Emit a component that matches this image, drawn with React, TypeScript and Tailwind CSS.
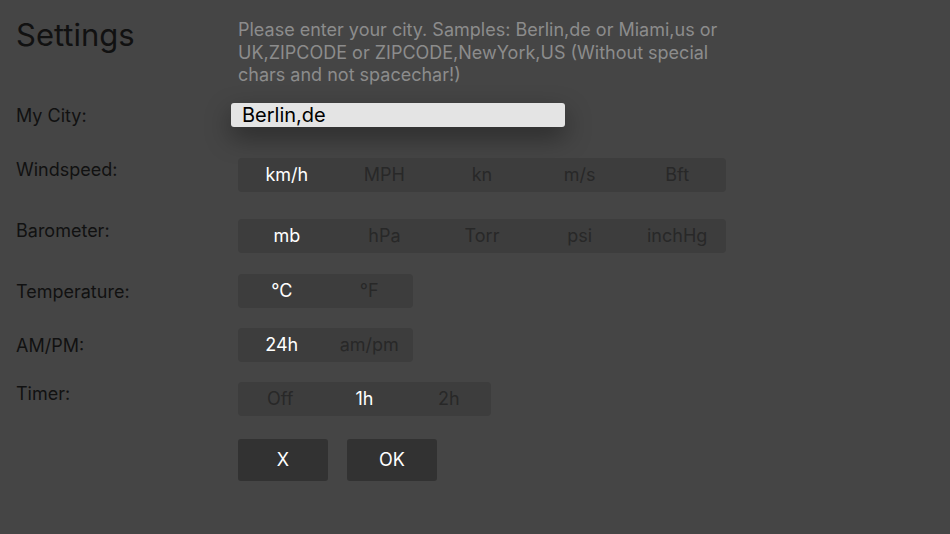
import { useState } from 'react';

const FONT = { fontFamily: 'Inter, "Open Sans", "Liberation Sans", sans-serif' };

type SegProps = {
  options: string[];
  width: string;
  value: number;
  onChange: (i: number) => void;
};

function Segmented({ options, width, value, onChange }: SegProps) {
  return (
    <div className={`flex h-[34px] rounded-[4px] bg-[#3d3d3d] ${width}`}>
      {options.map((o, i) => (
        <button
          key={o}
          type="button"
          onClick={() => onChange(i)}
          className={`flex-1 text-[18px] leading-none ${i === value ? 'text-white' : 'text-[#282828]'}`}
        >
          {o}
        </button>
      ))}
    </div>
  );
}

export default function App() {
  const [city,  setCity]  = useState('Berlin,de');
  const [wind,  setWind]  = useState(0);
  const [baro,  setBaro]  = useState(0);
  const [temp,  setTemp]  = useState(0);
  const [clock, setClock] = useState(0);
  const [timer, setTimer] = useState(1);

  return (
    <div className="h-[534px] w-full bg-[#454545] pl-4 pt-[19px] text-[#111]" style={FONT}>
      {/* Header */}
      <div className="flex">
        <h1 className="w-[222px] shrink-0 text-[31px] leading-[32px] text-[#111]">Settings</h1>
        <p className="text-[18px] leading-[22.5px] text-[#8c8c8c]">
          Please enter your city. Samples: Berlin,de or Miami,us or<br />
          UK,ZIPCODE or ZIPCODE,NewYork,US (Without special<br />
          chars and not spacechar!)
        </p>
      </div>

      {/* City */}
      <div className="mt-[16px] flex h-[24px] items-center">
        <span className="w-[222px] shrink-0 pt-[2px] text-[18px]">My City:</span>
        <input
          value={city}
          onChange={e => setCity(e.target.value)}
          className="-ml-[7px] h-[24px] w-[334px] rounded-[3px] bg-[#e4e4e4] px-[11px] text-[20px] text-black outline-none shadow-[0_10px_26px_rgba(0,0,0,0.4)]"
        />
      </div>

      {/* Windspeed */}
      <div className="mt-[31px] flex">
        <span className="w-[222px] shrink-0 pt-[1px] text-[18px] leading-[22px]">Windspeed:</span>
        <Segmented options={['km/h', 'MPH', 'kn', 'm/s', 'Bft']} width="w-[488px]" value={wind} onChange={setWind} />
      </div>

      {/* Barometer */}
      <div className="mt-[27px] flex">
        <span className="w-[222px] shrink-0 pt-[1px] text-[18px] leading-[22px]">Barometer:</span>
        <Segmented options={['mb', 'hPa', 'Torr', 'psi', 'inchHg']} width="w-[488px]" value={baro} onChange={setBaro} />
      </div>

      {/* Temperature */}
      <div className="mt-[21px] flex items-center">
        <span className="w-[222px] shrink-0 pt-[2px] text-[18px] leading-[22px]">Temperature:</span>
        <Segmented options={['°C', '°F']} width="w-[175px]" value={temp} onChange={setTemp} />
      </div>

      {/* AM/PM */}
      <div className="mt-[20px] flex items-center">
        <span className="w-[222px] shrink-0 pt-[2px] text-[18px] leading-[22px]">AM/PM:</span>
        <Segmented options={['24h', 'am/pm']} width="w-[175px]" value={clock} onChange={setClock} />
      </div>

      {/* Timer */}
      <div className="mt-[20px] flex">
        <span className="w-[222px] shrink-0 pt-[1px] text-[18px] leading-[22px]">Timer:</span>
        <Segmented options={['Off', '1h', '2h']} width="w-[253px]" value={timer} onChange={setTimer} />
      </div>

      {/* Actions */}
      <div className="mt-[23px] flex gap-[19px] pl-[222px]">
        <button type="button" className="h-[42px] w-[90px] rounded-[3px] bg-[#323232] text-[18px] text-white">X</button>
        <button type="button" className="h-[42px] w-[90px] rounded-[3px] bg-[#323232] text-[18px] text-white">OK</button>
      </div>
    </div>
  );
}
